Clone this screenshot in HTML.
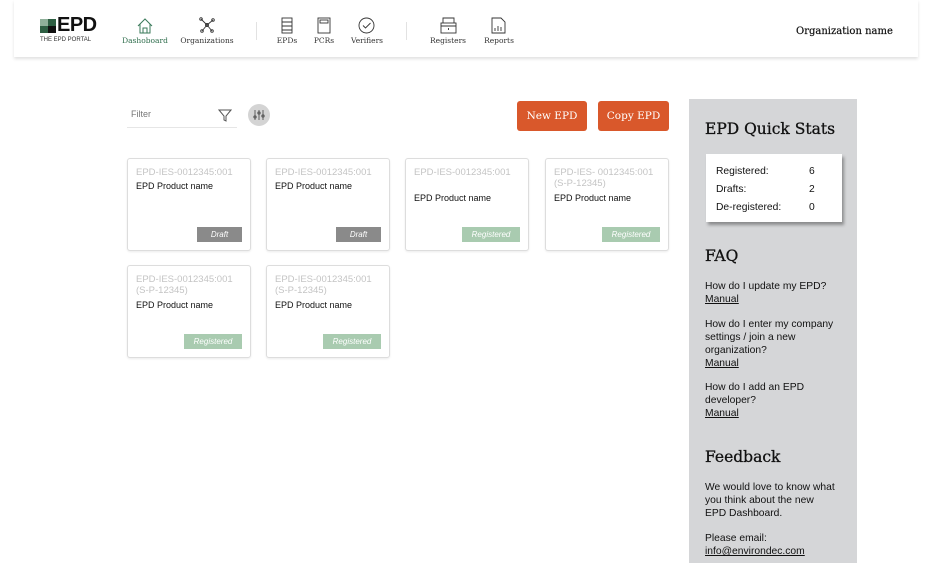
<!DOCTYPE html><html><head><style>
body{margin:0;width:928px;height:583px;background:#fff;font-family:"Liberation Sans",sans-serif;position:relative;overflow:hidden}
.a{position:absolute}
.hdr{left:14px;top:0;width:904px;height:57px;background:#fff;box-shadow:0 2px 3px rgba(0,0,0,.12)}
.nav{font-family:"DejaVu Serif","Liberation Serif",serif;font-size:7.5px;color:#333;text-align:center}
.card{width:122px;height:91px;border:1px solid #ddd;border-radius:3px;background:#fff;box-shadow:0 1px 2px rgba(0,0,0,.08)}
.card .id{position:absolute;left:8px;top:8px;font-size:9.5px;color:#c4c4c4;line-height:11px}
.card .pn{position:absolute;left:8px;font-size:9px;color:#111}
.badge{position:absolute;right:8px;bottom:8px;height:15px;font-size:8px;font-style:italic;color:#fff;text-align:center;line-height:15px}
.dr{width:45px;background:#8a8a8a}.rg{width:58px;background:#a9cbb0}
.btn{background:#d9582b;color:#fff;font-family:"DejaVu Serif",serif;font-size:10.5px;text-align:center;line-height:30px;height:30px;border-radius:3px}
.side{left:689px;top:99px;width:168px;height:464px;background:#d5d6d8}
.h{font-family:"DejaVu Serif","Liberation Serif",serif;font-size:15.5px;color:#111;-webkit-text-stroke:0.3px #111}
.t{font-size:10.3px;color:#111;line-height:13px}
.t u{display:block}
</style></head><body>
<div class="a hdr"></div>
<div class="a" style="left:40px;top:19px;width:8px;height:7px;background:#8fb09a"></div>
<div class="a" style="left:48px;top:19px;width:8px;height:7px;background:#2e5f43"></div>
<div class="a" style="left:40px;top:26px;width:8px;height:7px;background:#2e5f43"></div>
<div class="a" style="left:48px;top:26px;width:8px;height:7px;background:#111"></div>
<div class="a" style="left:57px;top:14px;font-size:20px;font-weight:bold;color:#111;letter-spacing:-0.5px">EPD</div>
<div class="a" style="left:40px;top:37px;font-size:6px;color:#333">THE EPD PORTAL</div>
<svg class="a" style="left:136px;top:18px" width="18" height="16" viewBox="0 0 18 16" fill="none" stroke="#3a7a5a" stroke-width="1"><path d="M2 8L9 1l7 7M4 6v9h10V6M7 15V10h4v5"/></svg>
<div class="a nav" style="left:122px;top:36px;width:46px;color:#2e6d4c">Dashoboard</div>
<svg class="a" style="left:198px;top:17px" width="18" height="17" viewBox="0 0 18 17" fill="none" stroke="#333" stroke-width="0.9"><path d="M9 8L3 2M9 8l6-5M9 8l-5 6M9 8l5 6"/><circle cx="3" cy="2" r="1.3"/><circle cx="15" cy="3" r="1.3"/><circle cx="4" cy="14" r="1.3"/><circle cx="14" cy="14" r="1.3"/><circle cx="9" cy="8" r="1.5"/></svg>
<div class="a nav" style="left:178px;top:36px;width:58px">Organizations</div>
<div class="a" style="left:256px;top:22px;width:1px;height:18px;background:#e2e2e2"></div>
<svg class="a" style="left:281px;top:17px" width="12" height="17" viewBox="0 0 12 17" fill="none" stroke="#333" stroke-width="0.9"><rect x="1" y="1" width="10" height="15"/><path d="M1 5h10M1 9h10M1 13h10"/></svg>
<div class="a nav" style="left:274px;top:36px;width:26px">EPDs</div>
<svg class="a" style="left:317px;top:17px" width="14" height="17" viewBox="0 0 14 17" fill="none" stroke="#333" stroke-width="0.9"><rect x="1" y="1" width="12" height="15"/><rect x="3" y="3" width="8" height="3"/></svg>
<div class="a nav" style="left:311px;top:36px;width:26px">PCRs</div>
<svg class="a" style="left:358px;top:17px" width="17" height="17" viewBox="0 0 17 17" fill="none" stroke="#333" stroke-width="0.9"><circle cx="8.5" cy="8.5" r="7.5"/><path d="M5 8.5l2.5 2.5 5-5"/></svg>
<div class="a nav" style="left:348px;top:36px;width:38px">Verifiers</div>
<div class="a" style="left:406px;top:22px;width:1px;height:18px;background:#e2e2e2"></div>
<svg class="a" style="left:440px;top:17px" width="17" height="17" viewBox="0 0 17 17" fill="none" stroke="#333" stroke-width="0.9"><rect x="1" y="6" width="15" height="10"/><path d="M3 6V1h11v5M1 9h15M8.5 11v2"/></svg>
<div class="a nav" style="left:426px;top:36px;width:44px">Registers</div>
<svg class="a" style="left:491px;top:17px" width="15" height="17" viewBox="0 0 15 17" fill="none" stroke="#333" stroke-width="0.9"><path d="M1 1h9l4 4v11H1z"/><path d="M4 14v-3M7 14V9M10 14v-4"/></svg>
<div class="a nav" style="left:482px;top:36px;width:34px">Reports</div>
<div class="a" style="left:796px;top:26px;font-family:'DejaVu Serif',serif;font-size:10px;color:#111;-webkit-text-stroke:0.2px #111">Organization name</div>

<div class="a" style="left:131px;top:109px;font-size:9px;color:#777">Filter</div>
<div class="a" style="left:127px;top:127px;width:110px;height:1px;background:#e6e6e6"></div>
<svg class="a" style="left:218px;top:108px" width="14" height="14" viewBox="0 0 14 14" fill="none" stroke="#555" stroke-width="1"><path d="M1 2h12L8 8v5L6 12V8z"/></svg>
<div class="a" style="left:248px;top:104px;width:22px;height:22px;border-radius:50%;background:#d4d4d4"></div>
<svg class="a" style="left:253px;top:109px" width="12" height="12" viewBox="0 0 12 12" stroke="#555" stroke-width="0.9" fill="none"><path d="M2 1v10M6 1v10M10 1v10"/><circle cx="2" cy="8" r="1.2"/><circle cx="6" cy="4" r="1.2"/><circle cx="10" cy="7" r="1.2"/></svg>
<div class="a btn" style="left:517px;top:101px;width:70px">New EPD</div>
<div class="a btn" style="left:598px;top:101px;width:71px">Copy EPD</div>

<div class="a card" style="left:127px;top:158px"><div class="id">EPD-IES-0012345:001</div><div class="pn" style="top:22px">EPD Product name</div><div class="badge dr">Draft</div></div>
<div class="a card" style="left:266px;top:158px"><div class="id">EPD-IES-0012345:001</div><div class="pn" style="top:22px">EPD Product name</div><div class="badge dr">Draft</div></div>
<div class="a card" style="left:405px;top:158px"><div class="id">EPD-IES-0012345:001</div><div class="pn" style="top:34px">EPD Product name</div><div class="badge rg">Registered</div></div>
<div class="a card" style="left:545px;top:158px"><div class="id">EPD-IES- 0012345:001<br>(S-P-12345)</div><div class="pn" style="top:34px">EPD Product name</div><div class="badge rg">Registered</div></div>
<div class="a card" style="left:127px;top:265px"><div class="id">EPD-IES-0012345:001<br>(S-P-12345)</div><div class="pn" style="top:34px">EPD Product name</div><div class="badge rg">Registered</div></div>
<div class="a card" style="left:266px;top:265px"><div class="id">EPD-IES-0012345:001<br>(S-P-12345)</div><div class="pn" style="top:34px">EPD Product name</div><div class="badge rg">Registered</div></div>

<div class="a side"></div>
<div class="a h" style="left:705px;top:120px">EPD Quick Stats</div>
<div class="a" style="left:706px;top:154px;width:136px;height:68px;background:#fff;box-shadow:2px 3px 3px rgba(0,0,0,.35)"></div>
<div class="a t" style="left:716px;top:163px;line-height:18px">Registered:<br>Drafts:<br>De-registered:</div>
<div class="a t" style="left:809px;top:163px;line-height:18px">6<br>2<br>0</div>
<div class="a h" style="left:705px;top:247px">FAQ</div>
<div class="a t" style="left:705px;top:280px">How do I update my EPD?<u>Manual</u></div>
<div class="a t" style="left:705px;top:318px">How do I enter my company<br>settings / join a new<br>organization?<u>Manual</u></div>
<div class="a t" style="left:705px;top:381px">How do I add an EPD<br>developer?<u>Manual</u></div>
<div class="a h" style="left:705px;top:448px">Feedback</div>
<div class="a t" style="left:705px;top:481px">We would love to know what<br>you think about the new<br>EPD Dashboard.</div>
<div class="a t" style="left:705px;top:532px">Please email:<u>info@environdec.com</u></div>
</body></html>
